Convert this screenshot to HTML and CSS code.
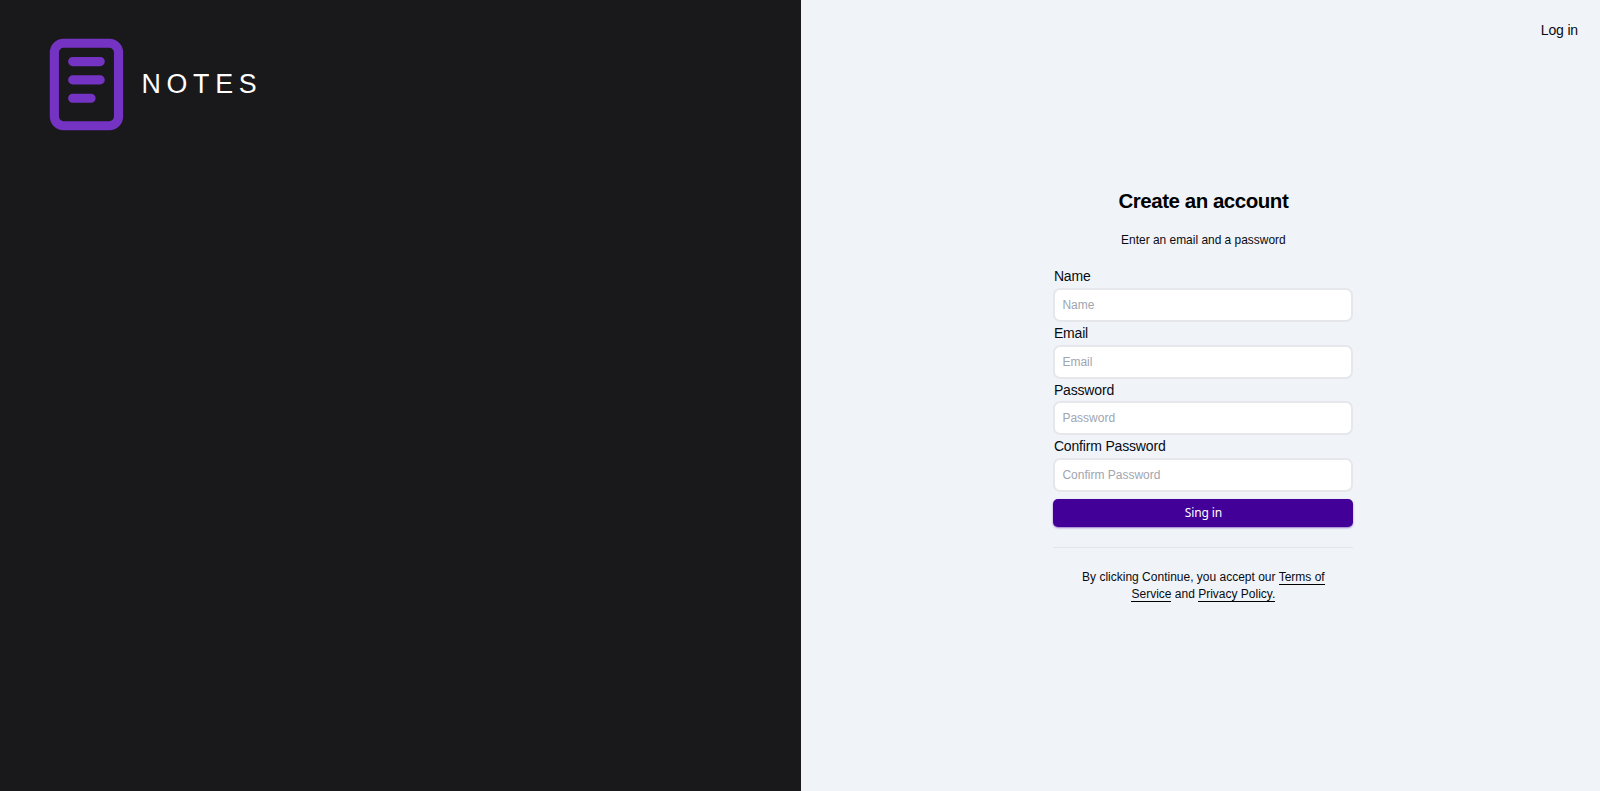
FILE: index.html
```html
<!DOCTYPE html>
<html lang="en">
<head>
<meta charset="utf-8">
<title>Notes</title>
<link rel="stylesheet" href="styles.css">
</head>
<body>
<main class="page">
  <section class="brand">
    <svg class="logo" viewBox="-0.1 -0.1 24 24" fill="none" stroke="currentColor" stroke-width="2" stroke-linecap="round">
      <rect x="5" y="3" width="14" height="18" rx="2"/>
      <path d="M9 7h6M9 11h6M9 15h4"/>
    </svg>
    <span class="brand-name">NOTES</span>
  </section>
  <section class="panel">
    <nav class="top"><a class="login">Log in</a></nav>
    <div class="signup">
      <h1 class="title">Create an account</h1>
      <p class="subtitle">Enter an email and a password</p>
      <form class="form">
        <label class="label" for="name">Name</label>
        <input class="input" id="name" type="text" placeholder="Name">
        <label class="label" for="email">Email</label>
        <input class="input" id="email" type="email" placeholder="Email">
        <label class="label" for="password">Password</label>
        <input class="input" id="password" type="password" placeholder="Password">
        <label class="label" for="confirm">Confirm Password</label>
        <input class="input" id="confirm" type="password" placeholder="Confirm Password">
        <button class="submit" type="button">Sing in</button>
      </form>
      <p class="terms">By clicking Continue, you accept our <a class="link">Terms of Service</a> and <a class="link">Privacy Policy.</a></p>
    </div>
  </section>
</main>
</body>
</html>
```
FILE: styles.css
```css
* { box-sizing: border-box; }
body { margin: 0; font-family: "Liberation Sans", Arial, sans-serif; color: #080b12; }
.page { display: grid; grid-template-columns: 801px 1fr; height: 791px; }
.brand { display: flex; align-items: flex-start; background: #19191b; padding: 29px 0 0 31px; }
.logo { width: 110px; height: 110px; color: #7433c2; flex: none; }
.brand-name { color: #fff; font-size: 26.8px; line-height: 110px; letter-spacing: 5.7px; padding-left: 0.5px; }
.panel { display: flex; flex-direction: column; background: #f0f4f9; }
.top { display: flex; justify-content: flex-end; padding: 20px 22px 0 0; }
.login { font-size: 14px; line-height: 20px; letter-spacing: -0.15px; }
.signup { width: 300px; margin: 146.5px 0 0 252.4px; }
.title { margin: 0; font-size: 20.5px; line-height: 28px; letter-spacing: -0.47px; text-align: center; color: #000; }
.subtitle { margin: 16px 0 0; font-size: 11.95px; line-height: 19px; text-align: center; }
.form { display: flex; flex-direction: column; padding: 16.6px 0 20.4px; border-bottom: 1px solid #e4e6ec; }
.label { font-size: 14px; line-height: 20.8px; letter-spacing: -0.17px; padding-left: 0.5px; }
.input { height: 34px; margin: 1px 0; padding: 0 7px; border: 2px solid #e5e7eb; border-radius: 7px; background: #fff; font: 12px "Liberation Sans", Arial, sans-serif; }
.input::placeholder { color: #a1a5b0; opacity: 1; }
.submit { height: 28px; margin-top: 5.5px; padding-bottom: 2px; border: 0; border-radius: 5px; background: #420099; color: #fff; font: 12px "Noto Sans", sans-serif; letter-spacing: -0.1px; box-shadow: 0 1px 2px rgba(66, 0, 153, .5); }
.terms { margin: 21px 25px 0; font-size: 12px; line-height: 17px; text-align: center; }
.link { border-bottom: 1px solid #000; }
```
